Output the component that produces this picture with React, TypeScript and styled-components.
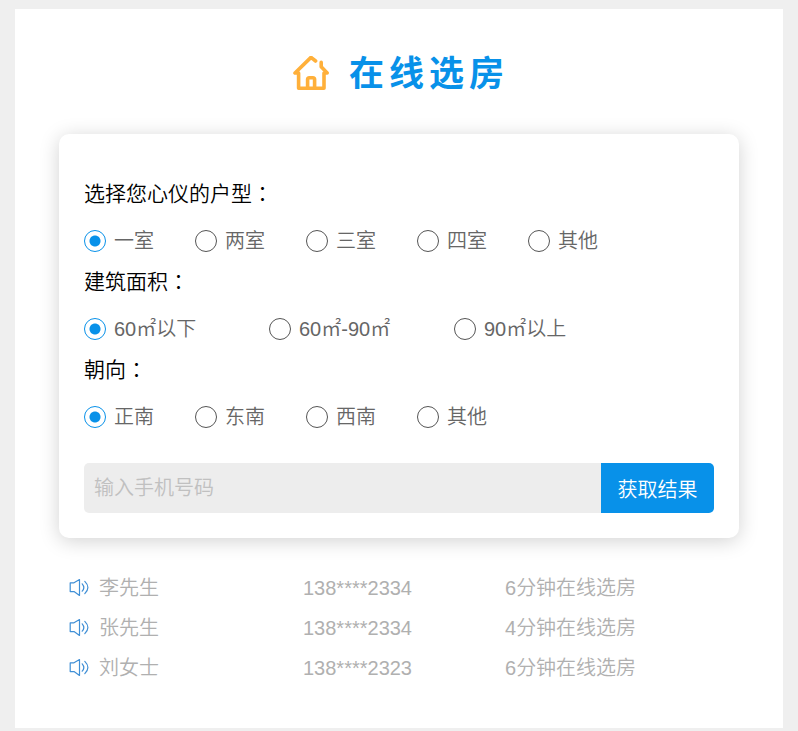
import React, { useState } from 'react';
import styled, { createGlobalStyle } from 'styled-components';

const GlobalStyle = createGlobalStyle`
  * { box-sizing: border-box; }
  body {
    margin: 0;
    background: #efefef;
    font-family: "Liberation Sans", "Noto Sans CJK SC", sans-serif;
    font-size: 20px;
    font-weight: 350;
    color: #000;
  }
`;

const Page = styled.div`
  padding: 9px 15px 3px;
`;

const Sheet = styled.main`
  background: #fff;
  padding: 35px 44px 40px;
`;

const Header = styled.header`
  display: flex;
  align-items: center;
  justify-content: center;
  gap: 20px;
  height: 60px;
  margin-bottom: 30px;
  padding-left: 4px;
`;

const Title = styled.h1`
  margin: 0;
  font-size: 35px;
  line-height: 60px;
  font-weight: 700;
  letter-spacing: 5px;
  color: #0891e9;
`;

const Card = styled.form`
  padding: 44px 25px 25px;
  border-radius: 10px;
  background: #fff;
  box-shadow: 0 3px 20px rgba(0, 0, 0, 0.18);
`;

const Group = styled.fieldset`
  margin: 0 0 4px;
  padding: 0;
  border: 0;
  min-width: 0;
`;

const Question = styled.legend`
  padding: 0;
  margin-bottom: 10px;
  font-size: 21px;
  line-height: 32px;
`;

const Colon = styled.span`
  font-family: "Noto Sans CJK JP", sans-serif;
  line-height: 20px;
`;

const Options = styled.div<{ $wide?: boolean }>`
  display: grid;
  grid-template-columns: ${(p) => (p.$wide ? 'repeat(3, 185px)' : 'repeat(5, 111px)')};
`;

const Option = styled.label`
  display: flex;
  align-items: center;
  gap: 8px;
  height: 42px;
  line-height: 22px;
  color: #666;
  white-space: nowrap;
  cursor: pointer;
`;

const Numeric = styled.span`
  font-weight: 400;
`;

const Radio = styled.input`
  appearance: none;
  flex: none;
  width: 22px;
  height: 22px;
  margin: 0;
  border: 1px solid #555;
  border-radius: 50%;
  background: #fff;
  cursor: pointer;

  &:checked {
    border-color: #0891e9;
    background: radial-gradient(circle, #0891e9 5px, #fff 6px);
  }
`;

const PhoneRow = styled.div`
  display: flex;
  height: 50px;
  margin-top: 25px;
  border-radius: 5px;
  overflow: hidden;
`;

const PhoneInput = styled.input`
  flex: 1;
  min-width: 0;
  padding: 0 10px;
  border: 0;
  background: #ededed;
  font: inherit;
  color: #666;
  outline: none;

  &::placeholder {
    color: #c0c0c0;
    opacity: 1;
  }
`;

const Submit = styled.button`
  flex: none;
  width: 113px;
  padding: 0;
  border: 0;
  background: #0891e9;
  color: #fff;
  font: inherit;
  cursor: pointer;
`;

const Log = styled.table`
  width: 100%;
  margin-top: 30px;
  border-collapse: collapse;
  table-layout: fixed;
  color: #b0b0b0;
`;

const Cell = styled.td<{ $width?: number }>`
  width: ${(p) => (p.$width ? `${p.$width}px` : 'auto')};
  height: 40px;
  padding: 0;
  line-height: 40px;
  white-space: nowrap;
`;

const Person = styled.div`
  display: flex;
  align-items: center;
  gap: 10px;
  padding-left: 10px;
`;

const HouseIcon = () => (
  <svg width="36" height="36" viewBox="0 0 36 36" fill="none" stroke="#ffb03a" strokeWidth="3.6" strokeLinecap="round" strokeLinejoin="round" aria-hidden="true">
    <path d="M22.6 5L18 1.4L2 17H5.6V32.2H31V17H34.2L28.2 10.8V6.4" />
    <path d="M14.6 32V23.6Q14.6 21.8 16.4 21.8H19.8Q21.6 21.8 21.6 23.6V32" />
  </svg>
);

const SpeakerIcon = () => (
  <svg width="20" height="20" viewBox="0 0 20 20" fill="none" stroke="#3f8fd6" strokeWidth="1.2" strokeLinecap="round" strokeLinejoin="round" aria-hidden="true">
    <path d="M1.2 4.8H5L10.5 1.6V17.4L5 13.6H1.2Z" />
    <path d="M13.2 5.8Q16.4 9.5 13.2 13.2" />
    <path d="M15.8 3.4Q22 9.5 15.8 15.6" />
  </svg>
);

const questions = [
  { name: 'layout', title: '选择您心仪的户型', options: ['一室', '两室', '三室', '四室', '其他'] },
  { name: 'area', title: '建筑面积', wide: true, options: ['60㎡以下', '60㎡-90㎡', '90㎡以上'] },
  { name: 'facing', title: '朝向', options: ['正南', '东南', '西南', '其他'] },
];

const visitors = [
  { name: '李先生', phone: '138****2334', action: '6分钟在线选房' },
  { name: '张先生', phone: '138****2334', action: '4分钟在线选房' },
  { name: '刘女士', phone: '138****2323', action: '6分钟在线选房' },
];

const withNumerals = (text: string) =>
  text
    .split(/([-\d*]+)/)
    .filter(Boolean)
    .map((part, i) => (/^[-\d*]/.test(part) ? <Numeric key={i}>{part}</Numeric> : part));

export default function App() {
  const [phone, setPhone] = useState('');
  return (
    <>
      <GlobalStyle />
      <Page lang="zh-CN">
        <Sheet>
          <Header>
            <HouseIcon />
            <Title>在线选房</Title>
          </Header>
          <Card onSubmit={(e) => e.preventDefault()}>
            {questions.map((q) => (
              <Group key={q.name}>
                <Question>
                  {q.title}
                  <Colon lang="ja">：</Colon>
                </Question>
                <Options $wide={q.wide}>
                  {q.options.map((text, i) => (
                    <Option key={text}>
                      <Radio type="radio" name={q.name} value={text} defaultChecked={i === 0} />
                      <span>{withNumerals(text)}</span>
                    </Option>
                  ))}
                </Options>
              </Group>
            ))}
            <PhoneRow>
              <PhoneInput
                type="tel"
                aria-label="输入手机号码"
                placeholder="输入手机号码"
                value={phone}
                onChange={(e) => setPhone(e.target.value)}
              />
              <Submit type="submit">获取结果</Submit>
            </PhoneRow>
          </Card>
          <Log>
            <tbody>
              {visitors.map((v) => (
                <tr key={v.name}>
                  <Cell $width={244}>
                    <Person>
                      <SpeakerIcon />
                      {v.name}
                    </Person>
                  </Cell>
                  <Cell $width={202}>{withNumerals(v.phone)}</Cell>
                  <Cell>{withNumerals(v.action)}</Cell>
                </tr>
              ))}
            </tbody>
          </Log>
        </Sheet>
      </Page>
    </>
  );
}
